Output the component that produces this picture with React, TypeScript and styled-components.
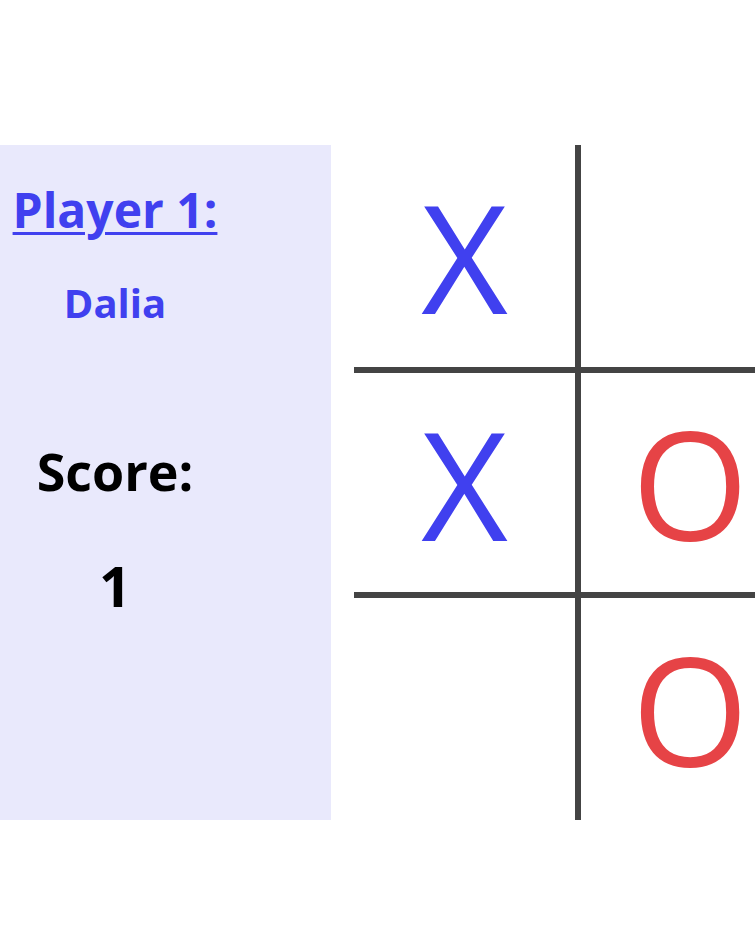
import React from "react";
import styled, { createGlobalStyle } from "styled-components";

const Global = createGlobalStyle`
  html, body {
    margin: 0;
    padding: 0;
    background: #ffffff;
    overflow: hidden;
  }
  body {
    font-family: "Open Sans", "Noto Sans", sans-serif;
  }
`;

const Page = styled.div`
  width: 100vw;
  height: 100vh;
  overflow: hidden;
  padding-top: 145px;
  box-sizing: border-box;
  display: flex;
  align-items: flex-start;
  gap: 23px;
`;

const PlayerPanel = styled.section`
  flex: 0 0 331px;
  height: 675px;
  background: #e9e9fc;
  box-sizing: border-box;
`;

const PanelColumn = styled.div`
  width: 230px;
  display: flex;
  flex-direction: column;
  align-items: center;
  text-align: center;
`;

const PlayerTitle = styled.h1`
  margin: 32px 0 0 0;
  font-size: 48px;
  font-weight: 700;
  color: #4040ef;
  text-decoration: underline;
  text-decoration-thickness: 3px;
  text-underline-offset: 4px;
  line-height: normal;
`;

const PlayerName = styled.h2`
  margin: 33px 0 0 0;
  font-size: 40px;
  font-weight: 700;
  color: #4040ef;
  line-height: normal;
`;

const ScoreLabel = styled.h2`
  margin: 105px 0 0 0;
  font-size: 52px;
  font-weight: 700;
  color: #000000;
  line-height: normal;
`;

const ScoreValue = styled.div`
  margin: 41px 0 0 0;
  font-size: 56px;
  font-weight: 700;
  color: #000000;
  line-height: normal;
`;

const Board = styled.div`
  flex: 0 0 auto;
  display: grid;
  grid-template-columns: repeat(3, 224px);
  grid-template-rows: repeat(3, 225px);
`;

const Cell = styled.div<{ $row: number; $col: number; $mark: string }>`
  box-sizing: border-box;
  display: flex;
  align-items: center;
  justify-content: center;
  font-size: 150px;
  font-weight: 400;
  line-height: normal;
  color: ${(p) => (p.$mark === "X" ? "#4040ef" : "#e64346")};
  border-top: ${(p) => (p.$row > 0 ? "3px solid #444444" : "none")};
  border-bottom: ${(p) => (p.$row < 2 ? "3px solid #444444" : "none")};
  border-left: ${(p) => (p.$col > 0 ? "3px solid #444444" : "none")};
  border-right: ${(p) => (p.$col < 2 ? "3px solid #444444" : "none")};
`;

const board = [
  ["X", "", ""],
  ["X", "O", ""],
  ["", "O", ""],
];

export default function App() {
  return (
    <>
      <Global />
      <Page>
        <PlayerPanel>
          <PanelColumn>
            <PlayerTitle>Player 1:</PlayerTitle>
            <PlayerName>Dalia</PlayerName>
            <ScoreLabel>Score:</ScoreLabel>
            <ScoreValue>1</ScoreValue>
          </PanelColumn>
        </PlayerPanel>
        <Board>
          {board.map((row, r) =>
            row.map((mark, c) => (
              <Cell key={`${r}-${c}`} $row={r} $col={c} $mark={mark}>
                {mark}
              </Cell>
            ))
          )}
        </Board>
      </Page>
    </>
  );
}
